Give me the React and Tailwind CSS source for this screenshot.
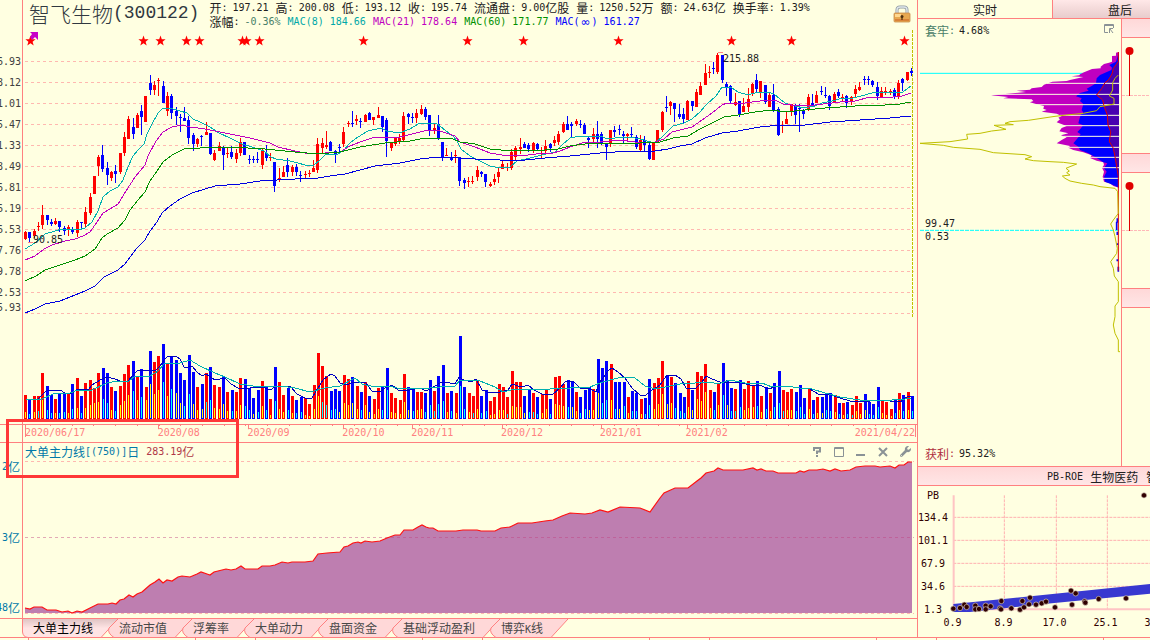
import React from 'react';
import clsx from 'clsx';
import { FaWrench } from 'react-icons/fa';

const PRICE_LEVELS = [
  '206.93', '188.12', '171.01', '155.47', '141.33', '128.49', '116.81',
  '106.19', '96.53', '87.76', '79.78', '72.53',
];

const QUOTES = [
  { label: '开', value: '197.21' },
  { label: '高', value: '200.08' },
  { label: '低', value: '193.12' },
  { label: '收', value: '195.74' },
  { label: '流通盘', value: '9.00', unit: '亿股' },
  { label: '量', value: '1250.52', unit: '万' },
  { label: '额', value: '24.63', unit: '亿' },
  { label: '换手率', value: '1.39%' },
];

// bar colour + height, then inner bar colour (y = yellow, c = cyan) + height
const VOLUMES = `
r24y6 b20c4 r23y6 r23c7 r46y18 b33c8 b24c5 r20y5 b25c5 b26c6 r26y5 b35c9 r41y10 b23c5 r36y10 r39y13
r31y15 r46y16 b51c19 b46c15 r32y8 b28c7 r33y13 r45y17 r54y23 b58c27 r43y18 b50c21 r32y18 b68y34
r57y24 r63y28 b75c36 r55y22 b63c29 b59y25 b46y15 b39c12 b64c24 b47y14 r32y8 b35y9 r46c16 b52c18
r34y10 r32y9 b42y14 r27y7 b29c7 r27y7 r41y13 b40c12 b31c8 b21y4 b29c6 r38y12 b33c8 r20y3 b52c17
r37y9 r24y6 b31c8 r23y5 b19c5 b22c6 r21y3 r15y2 r34y9 r66y22 r53c16 r43c13 b28c8 b30c9 b28y6
r44y15 r40y13 b42y15 r33y9 b27c8 r37y13 b23y6 r20y4 r31y9 b32c8 b51c28 r26y6 r21y5 r19y4 r45y16
b32y8 b29c7 r27y8 r27y9 b26c6 b39c13 r28c7 b43c14 b54c17 r26y6 b28c7 r26y5 b83c32 b32c9 r26y6
r23c5 r39y9 b23c5 b29c7 r18y3 r22y4 r35y8 r32y8 r22c4 r48y12 r37y11 r37y11 b23y5 b30c6 r26c6
b22c4 r25y5 r30y9 b20c4 r42y14 r43y13 r35y12 b39c11 b38y11 r27y7 b22c5 b29c9 b32y8 r30y8 b60y25
b51c15 b58c18 r55y18 b37c9 b37y9 b37c12 r22y5 b28c7 b26c7 r20y4 b21c4 b40c13 r36y9 r41y14 r58y24
b44y14 r42y15 b36c10 b26c7 b22c5 r38y11 b29y8 r47y19 r43y17 r55y26 r29y10 b27c8 r35y13 b56c23
b39y13 b31c7 r30c7 b39c11 r30y8 r38y10 r34y11 b38c12 r23y6 b32c9 r26y7 b36c11 b48c15 r29c7 r27y8
r30y8 b27c7 b34c11 b21c4 r31y9 b19c4 r22y5 b22y5 b25c8 b26c7 r24y6 b16c4 r16y3 b17c4 r14c3 r23y7
r16y4 b25y8 b17c4 b15c3 b32c11 r18y5 r17y3 r10y2 b20c5 r26y8 b24c7 r27y8 b23c7
`.trim().split(/\s+/).map((token) => {
  const [, color, height, inner, innerHeight] = token.match(/^([rb])(\d+)([yc])(\d+)$/);
  return { color, height: Number(height), inner, innerHeight: Number(innerHeight) };
});

// high, body top, body bottom, low
const CANDLES = `
231,232,239,240 232,232,238,242 229,231,236,238 222,226,227,231 205,215,225,229 215,215,220,225
219,222,224,226 218,221,224,225 221,221,227,232 226,228,231,235 225,227,230,236 227,229,232,234
220,222,233,237 222,222,223,228 207,212,224,227 193,197,213,215 176,176,194,194 155,157,166,176
145,155,169,172 162,168,175,185 171,172,178,181 165,171,174,183 153,153,172,174 132,137,153,156
116,119,139,139 118,127,134,139 113,115,128,128 105,111,117,135 96,96,122,122 75,83,90,95
81,85,90,95 78,80,81,96 81,86,103,103 92,96,111,116 94,96,113,119 107,111,116,125 114,117,118,132
107,118,121,121 116,120,138,144 133,135,144,151 138,139,144,147 135,136,137,146 122,132,135,135
133,133,154,155 150,153,160,161 142,146,151,151 146,147,155,170 147,153,154,158 146,152,157,159
149,153,159,163 138,142,153,156 142,142,155,155 155,159,160,164 156,159,160,163 152,159,160,163
149,151,165,169 145,153,158,161 153,157,158,161 162,162,186,192 168,178,180,182 166,172,177,177
158,165,172,177 165,167,172,176 164,167,172,176 171,175,176,182 171,174,175,178 170,173,174,177
160,168,172,172 138,144,170,173 138,143,148,153 131,145,147,149 141,142,151,151 150,151,155,163
144,147,148,152 127,132,144,147 121,123,124,127 111,123,124,127 115,119,121,125 118,121,122,128
114,115,122,122 112,113,120,120 117,117,120,125 107,115,118,118 116,116,127,132 118,120,141,157
142,143,148,151 137,138,144,146 134,138,141,144 112,116,140,141 113,114,117,124 113,117,118,123
109,113,118,123 105,109,114,115 107,109,117,120 115,115,131,136 123,128,130,134 115,124,138,140
142,142,158,161 148,155,156,156 152,157,160,161 150,155,156,163 157,157,181,186 178,180,183,189
177,181,182,187 176,181,182,184 166,170,177,181 171,172,174,177 174,174,182,187 182,184,186,187
174,179,182,185 168,172,177,183 160,164,169,169 163,167,168,171 149,152,168,170 146,148,157,160
138,147,149,154 142,144,148,148 143,145,149,152 142,143,151,153 143,144,149,151 147,150,151,159
140,146,151,154 143,144,148,152 136,140,143,146 131,134,142,145 122,124,132,133 116,124,130,130
122,124,126,138 119,121,124,126 120,124,125,128 123,125,134,134 137,138,140,148 128,134,139,142
121,134,139,148 132,134,143,145 143,143,147,160 130,130,144,147 126,130,132,137 125,129,130,135
131,134,136,144 133,134,136,140 127,134,135,138 135,137,147,149 135,140,150,152 136,140,145,151
143,145,159,160 143,143,160,160 130,130,142,142 111,112,130,132 96,107,108,112 101,102,106,115
103,103,109,122 104,114,117,119 108,114,119,124 100,101,120,120 101,101,106,111 89,92,107,107
82,86,95,95 64,73,85,85 66,72,73,78 62,68,69,74 53,55,72,74 55,55,80,83 82,84,88,96
85,86,101,104 93,102,105,106 101,101,115,117 98,106,112,112 88,99,107,112 83,84,94,96 74,80,89,93
81,81,92,98 85,85,102,104 92,95,107,107 84,95,110,112 107,109,135,136 121,125,126,133
112,119,124,124 104,104,112,116 104,106,115,124 104,108,109,132 109,111,114,119 94,97,109,111
94,103,105,107 91,95,103,103 86,91,92,95 87,95,96,98 95,96,106,110 92,94,103,103 89,92,96,98
94,97,98,101 95,96,103,108 96,97,102,105 85,89,94,98 82,87,90,91 76,79,80,85 76,79,80,85
80,81,85,87 82,87,96,100 87,91,98,98 87,91,92,95 89,91,92,95 88,90,97,99 80,83,97,99
78,79,83,91 72,72,80,81 68,71,73,76
`.trim().split(/\s+/).map((row) => row.split(',').map(Number));

const AVERAGES = [
  {
    color: '#00b0b0',
    points: '25,249 35,243 45,234 55,231 62,229 78,230 85,228 92,222 98,211 103,197 110,191 118,187 123,180 128,167 133,156 138,150 144,144 147,134 152,124 158,113 163,108 170,108 180,111 187,113 193,119 200,122 210,127 219,133 230,138 242,144 252,147 264,151 271,157 276,159 283,160 290,161 298,163 305,165 314,165 320,160 325,155 338,154 344,150 350,143 358,137 368,131 381,128 387,131 399,133 410,129 418,124 427,123 437,124 445,130 454,137 457,141 461,149 470,156 480,161 490,166 500,168 510,167 517,161 530,158 542,155 555,152 562,145 570,138 580,136 600,136 608,139 615,138 630,137 640,139 651,142 656,142 662,137 668,131 673,126 684,123 692,119 700,112 706,105 716,96 722,87 732,88 738,92 748,95 758,92 768,92 774,94 780,99 785,103 795,106 804,108 815,106 822,103 832,101 843,98 853,98 865,95 875,92 885,92 897,93 903,92 911,86',
  },
  {
    color: '#c000c0',
    points: '25,260 35,256 44,249 52,245 65,241 75,239 83,236 90,232 97,222 103,213 110,209 118,204 126,191 135,177 145,165 148,156 156,141 163,132 172,127 182,125 190,127 205,129 220,132 235,135 250,138 270,143 278,147 295,151 310,154 340,152 350,146 360,142 372,138 388,137 400,137 412,134 428,130 440,131 455,136 460,142 475,147 490,153 508,156 528,155 545,153 553,153 560,151 570,147 585,142 600,142 620,140 635,142 655,142 664,139 672,132 684,129 692,127 702,120 712,113 722,105 727,103 745,103 760,101 775,100 783,104 800,106 815,105 840,102 855,101 870,97 885,98 902,96 911,93',
  },
  {
    color: '#009000',
    points: '25,281 36,276 45,270 60,265 75,260 85,256 95,249 102,238 107,234 118,228 125,220 130,210 138,200 145,192 150,181 157,171 163,162 172,155 184,149 200,148 230,147 265,149 295,152 318,154 340,152 360,147 385,143 410,141 425,138 440,138 453,139 460,142 475,144 490,149 512,151 545,150 558,149 570,146 585,144 610,143 640,143 660,142 673,138 688,136 700,129 712,123 724,117 738,115 755,112 772,110 785,112 805,110 825,108 855,106 885,105 900,104 911,102',
  },
  {
    color: '#0000e0',
    points: '25,313 35,309 45,304 60,301 75,295 85,291 95,286 104,277 118,270 125,264 130,257 137,248 145,240 150,231 157,222 162,213 170,206 180,199 192,193 205,189 215,186 240,184 260,181 295,179 318,178 330,176 345,174 360,170 375,166 400,163 420,159 438,157 460,158 475,159 500,160 525,160 545,158 570,156 600,153 630,151 655,151 668,149 680,146 692,144 705,138 722,133 738,131 760,127 780,125 805,125 830,122 860,120 890,118 911,116',
  },
  {
    color: '#0000c0',
    points: '26,400 38,399 43,394 47,390 60,390 65,393 72,393 78,389 88,390 92,385 100,380 107,377 115,379 120,381 128,381 134,374 137,371 145,370 155,371 160,366 164,360 168,356 176,356 180,359 184,367 188,367 192,366 197,372 202,376 206,374 215,380 225,378 231,384 238,388 250,388 262,387 270,390 275,387 290,386 297,394 307,399 312,398 318,388 323,380 331,374 335,376 340,383 346,385 354,382 365,382 372,391 380,392 385,388 392,385 398,390 410,390 420,388 426,391 435,386 440,383 445,382 455,384 459,377 464,380 472,382 476,379 482,390 490,393 500,392 508,390 512,384 518,386 522,387 528,385 534,390 542,394 552,395 560,388 565,382 573,381 580,388 590,389 596,392 600,382 608,371 612,368 618,372 625,378 632,388 640,395 645,396 652,390 660,385 667,375 675,375 681,379 686,388 695,389 702,382 706,376 712,379 720,382 735,382 742,383 750,385 760,385 768,389 775,387 785,386 800,388 810,389 818,394 828,394 840,398 850,401 865,402 875,400 890,401 900,402 907,397 911,396',
  },
  {
    color: '#00b0b0',
    points: '26,399 40,400 55,393 70,393 78,390 92,390 107,383 118,381 128,382 135,376 150,376 158,371 165,363 180,363 190,360 200,366 215,373 225,377 240,384 260,387 280,386 295,388 310,392 325,388 340,386 355,378 362,384 375,387 390,386 400,389 430,388 440,387 455,386 460,380 480,381 495,387 503,392 515,389 530,389 550,389 570,388 590,387 600,383 610,380 622,377 635,378 645,386 655,389 665,387 680,384 710,382 718,384 730,380 745,383 762,383 772,387 785,386 800,388 812,389 825,393 840,397 860,400 880,401 905,399 911,398',
  },
];

const STARS = [30.5, 143.5, 160.5, 186.5, 199.5, 242.5, 246.5, 259.5, 363.5, 467.5, 523.5, 618.5, 731.5, 791.5, 904.5];

const FLOW_LINE =
  '25,608 30,609 34,607 42,607 47,610 56,610 62,612 68,611 72,613 77,611 82,612 90,608 98,604 108,604 112,603 116,604 120,600 124,599 129,595 133,597 137,594 142,592 150,585 155,582 159,579 163,583 167,580 172,581 178,577 182,576 190,577 197,574 201,572 207,574 210,575 214,572 218,571 226,569 231,570 236,569 241,566 245,569 258,569 262,566 270,566 275,565 282,562 288,563 292,562 305,562 313,561 318,554 327,553 340,552 344,547 348,546 353,543 358,542 361,543 365,541 372,542 380,541 387,538 395,535 400,535 404,530 413,530 418,527 422,525 426,527 429,528 433,528 438,531 456,531 463,530 477,530 481,531 495,531 501,528 510,527 518,523 532,523 545,521 553,520 562,516 570,513 585,514 592,513 600,510 608,512 620,507 640,508 650,512 660,498 664,493 675,488 688,488 697,481 701,478 706,473 714,471 718,468 723,470 733,470 743,470 753,468 757,470 761,469 766,471 773,471 778,473 796,473 800,471 804,472 809,470 817,470 823,469 830,471 835,469 841,471 850,470 856,467 865,466 875,466 880,467 890,466 895,468 899,465 904,465 908,462 912,462';

const SCATTER = [
  [160, 536], [180, 534], [193, 524], [200, 531], [226, 527], [226, 538], [237, 537], [257, 527],
  [257, 538], [272, 529], [300, 535], [304, 513], [303, 538], [334, 535], [360, 539], [367, 513],
  [372, 532], [387, 523], [390, 503], [408, 524], [425, 520], [438, 515], [465, 532], [513, 482],
  [527, 490], [516, 524], [554, 514], [556, 518], [596, 507], [678, 505], [732, 196],
];

const BOTTOM_TABS = ['大单主力线', '流动市值', '浮筹率', '大单动力', '盘面资金', '基础浮动盈利', '博弈K线'];

const Mono = ({ className, children }) => (
  <span className={clsx("font-['DejaVu_Sans_Mono',monospace] text-[10px] whitespace-pre", className)}>
    {children}
  </span>
);

const starPoints = (cx, cy) =>
  Array.from({ length: 10 }, (_, i) => {
    const r = i % 2 ? 2.2 : 5.4;
    const a = (Math.PI / 5) * i - Math.PI / 2;
    return `${(cx + r * Math.cos(a)).toFixed(1)},${(cy + r * Math.sin(a)).toFixed(1)}`;
  }).join(' ');

const LockIcon = () => (
  <svg viewBox="0 0 18 18" className="size-[18px]" aria-hidden="true">
    <path d="M4 10V5Q4 2 7 2H11Q14 2 14 5V10" fill="none" stroke="#8f9aa3" strokeWidth="3" />
    <path d="M4 10V5Q4 2 7 2H11Q14 2 14 5V10" fill="none" stroke="#dfe6ea" strokeWidth="1.4" />
    <rect x="1" y="8" width="16" height="9" rx="1" fill="#e8a850" stroke="#c88a4a" strokeWidth="0.8" />
    <rect x="2" y="9" width="6" height="3" fill="#ffd890" />
    <rect x="2" y="14" width="14" height="2" fill="#d98238" />
    <circle cx="9" cy="11.5" r="1.5" fill="#503010" />
    <rect x="8.4" y="12" width="1.2" height="3" fill="#503010" />
  </svg>
);

const PriceChart = () => (
  <svg
    viewBox="23 30 894 394"
    preserveAspectRatio="none"
    className="block h-[394px] w-full"
    shapeRendering="crispEdges"
    role="img"
    aria-label="日K线"
  >
    {Array.from({ length: 13 }, (_, i) => (
      <line key={i} x1="25" x2="914" y1={61.5 + i * 21} y2={61.5 + i * 21} stroke="#ffb8b0" strokeDasharray="3 3" />
    ))}
    <line x1="912.5" x2="912.5" y1="30" y2="317" stroke="#c0c000" strokeDasharray="3 1" />

    {CANDLES.map(([high, top, bottom, low], i) => {
      const x = 24 + Math.round(i * 4.301);
      const fill = VOLUMES[i].color === 'r' ? '#ff0000' : '#0000ff';
      return (
        <g key={i} fill={fill}>
          <rect x={x + 1} y={high} width="1" height={low - high} />
          <rect x={x} y={top} width="3" height={bottom - top} />
        </g>
      );
    })}

    {VOLUMES.map(({ color, height, inner, innerHeight }, i) => {
      const x = 24 + Math.round(i * 4.306);
      return (
        <g key={i}>
          <rect x={x} y={419 - height} width="3" height={height} fill={color === 'r' ? '#ff0000' : '#0000ff'} />
          <rect x={x + 1} y={418 - innerHeight} width="1" height={innerHeight} fill={inner === 'y' ? '#ffff00' : '#00ffff'} />
        </g>
      );
    })}

    {AVERAGES.map(({ color, points }, i) => (
      <polyline key={i} points={points} fill="none" stroke={color} />
    ))}

    <path d="M28 242.5H33M718 52.5H723" stroke="#ff8080" />
    <g fill="#ff0000" shapeRendering="auto">
      {STARS.map((x) => (
        <polygon key={x} points={starPoints(x, 41)} />
      ))}
    </g>
    <path d="M30 32H38V40L35 37L32 40L30 37L32 34Z" fill="#c800c8" shapeRendering="auto" />
  </svg>
);

const DATE_SEGMENTS = [
  { label: '2020/06/17', grow: 'grow-133' },
  { label: '2020/08', grow: 'grow-90' },
  { label: '2020/09', grow: 'grow-95' },
  { label: '2020/10', grow: 'grow-69' },
  { label: '2020/11', grow: 'grow-90' },
  { label: '2020/12', grow: 'grow-99' },
  { label: '2021/01', grow: 'grow-86' },
  { label: '2021/02', grow: 'grow-115' },
];

const DateAxis = () => (
  <div className="relative flex h-[18px] border-t border-[#ff8080] pl-[2px] text-[#ff8080]">
    <svg viewBox="23 0 894 14" preserveAspectRatio="none" className="absolute top-0 left-0 h-[14px] w-full" aria-hidden="true">
      <path d="M25.5 0V12M158.5 0V4M248.5 0V4M343.5 0V4M412.5 0V4M502.5 0V4M601.5 0V4M687.5 0V4M915.5 0V12" stroke="#ff8080" />
      {Array.from({ length: 40 }, (_, i) => (
        <rect key={i} x={Math.round(50 + i * 21.7)} y="0" width="1" height="1" fill="#ff8080" />
      ))}
    </svg>
    {DATE_SEGMENTS.map(({ label, grow }) => (
      <Mono key={label} className={clsx('w-0 leading-[16px]', grow)}>{label}</Mono>
    ))}
    <Mono className="w-0 grow-115 pr-[2px] text-right leading-[16px]">2021/04/22</Mono>
  </div>
);

const toolButton = 'flex w-[22px] items-center justify-center text-[#8a9296]';

const FlowPanel = () => (
  <div className="flex-1">
    <div className="flex h-[18px] items-center justify-between pr-px pb-px pl-[2px]">
      <h2 className="flex items-center text-xs leading-none text-[#0078a8]">
        大单主力线<Mono>[(750)]</Mono>日
        <Mono className="ml-[7px] text-[#b03848]">283.19</Mono>
        <span className="text-[#b03848]">亿</span>
      </h2>
      <div className="flex h-full">
        <button type="button" className={toolButton} aria-label="帮助">
          <svg viewBox="0 0 9 10" className="h-[10px] w-[9px]" fill="none" stroke="currentColor" strokeWidth="2">
            <path d="M1 4V1H7V4.500H4V7M4 8V10" />
          </svg>
        </button>
        <button type="button" className={toolButton} aria-label="最大化">
          <svg viewBox="0 0 10 10" className="size-[10px]" fill="none" stroke="currentColor">
            <path d="M0.5 0.500H9.500V9.500H0.500ZM0 1.500H10" />
          </svg>
        </button>
        <button type="button" className={toolButton} aria-label="最小化">
          <svg viewBox="0 0 10 10" className="size-[10px]"><rect y="7" width="9" height="2" fill="currentColor" /></svg>
        </button>
        <button type="button" className={toolButton} aria-label="关闭">
          <svg viewBox="0 0 10 10" className="size-[10px]" stroke="currentColor" strokeWidth="2"><path d="M1 1L9 9M9 1L1 9" /></svg>
        </button>
        <button type="button" className={toolButton} aria-label="设置">
          <FaWrench size={11} />
        </button>
      </div>
    </div>
    <svg viewBox="23 461 894 157" preserveAspectRatio="none" className="block h-[157px] w-full" role="img" aria-label="大单主力线">
      <polygon points={`25,613 ${FLOW_LINE} 912,613`} fill="#be7eb0" />
      <path d="M25 461.5H914M25 613.5H914" stroke="#ffb8b0" strokeDasharray="3 3" />
      <path d="M25 537.5H914" stroke="#c04080" strokeOpacity="0.45" strokeDasharray="3 3" />
      <polyline points={FLOW_LINE} fill="none" stroke="#ff1010" strokeWidth="1.2" />
    </svg>
  </div>
);

const BottomTab = ({ label, active }) => {
  const width = [...label].reduce((sum, ch) => sum + (ch === 'K' ? 6 : 12), 26);
  const left = active ? 'M2.500 0V13Q3 18 8 18.500' : 'M12 0L3 9Q1 14 8 18.500';
  return (
    <button
      type="button"
      role="tab"
      aria-selected={active}
      className={clsx('relative h-[18px] shrink-0 text-xs leading-none whitespace-nowrap', active ? 'text-black' : 'text-[#484848]')}
      style={{ width }}
    >
      <svg width={width + 14} height="19" className="absolute top-0 left-0" aria-hidden="true">
        <path
          d={`${left}H${width - 5}L${width + 12} 0`}
          fill={active ? 'url(#activeTab)' : '#ffd8d8'}
          stroke="#ff8080"
        />
      </svg>
      <span className="relative">
        {label.split('K').map((part, i) => (
          <React.Fragment key={part}>
            {i > 0 && <Mono>K</Mono>}
            {part}
          </React.Fragment>
        ))}
      </span>
    </button>
  );
};

// viewBox units are a third of a pixel
const ChipDistribution = () => (
  <svg viewBox="54 57 609 1341" preserveAspectRatio="none" className="block h-[447px] w-full" role="img" aria-label="筹码分布">
    <path d="M60 220H657" stroke="#00ffff" strokeWidth="3" />
    <path d="M60 691H657" stroke="#00ffff" strokeWidth="3" strokeDasharray="12 3" />
    <polygon
      fill="#c000c0"
      points="657,156 648,158 648,167 636,168 636,185 627,188 612,192 602,200 602,205 576,207 552,217 540,223 538,226 515,229 550,231 527,236 510,240 500,243 457,245 432,254 425,261 395,265 390,269 350,272 378,276 324,281 273,286 325,291 310,295 395,298 400,303 390,307 408,312 432,318 430,326 440,330 425,335 470,341 485,348 475,353 480,358 470,367 500,378 485,384 478,394 505,400 483,406 500,412 485,420 470,430 510,438 505,443 520,450 550,457 575,466 570,474 590,482 610,487 612,495 606,503 612,515 608,530 612,545 630,550 640,558 657,563"
    />
    <polygon
      fill="#0000ff"
      points="657,156 648,185 628,195 636,203 634,210 600,225 590,235 588,250 575,258 560,266 566,272 540,279 528,289 545,295 540,303 550,312 545,330 550,338 542,345 538,358 535,370 550,376 540,388 532,396 542,403 534,413 520,430 535,440 540,450 565,460 590,474 610,487 622,490 612,505 620,515 612,530 615,545 632,552 657,563"
    />
    <polygon
      fill="#4800b0"
      points="657,156 655,185 640,205 636,222 625,240 615,248 605,265 590,285 608,300 612,318 622,345 624,375 632,395 628,425 640,445 645,470 650,500 657,530"
    />
    <path
      d="M440 250H657M270 283H657M400 314H657M480 346H657M490 377H657M490 409H657M505 442H657M570 472H657M605 503H657M605 535H657"
      stroke="#ffffe1"
      strokeWidth="3"
    />
    <path d="M652 655V668M650 665V690M652 695V705M652 730V735M652 778V784M655 800V815" stroke="#0000ff" strokeWidth="5" />
    <polyline
      fill="none"
      stroke="#e00000"
      strokeWidth="3"
      points="655,156 655,185 640,205 636,222 625,240 615,248 605,265 590,285 608,300 612,318 622,345 624,375 632,395 628,425 640,445 645,470 650,500 655,530 655,812"
    />
    <polyline
      fill="none"
      stroke="#c0c000"
      strokeWidth="3"
      points="655,225 645,235 638,248 638,270 628,288 642,295 642,312 600,320 590,332 550,340 500,345 465,349 385,361 330,365 315,370 340,374 282,376 318,388 275,393 240,400 200,403 203,417 150,425 60,430 130,436 160,442 240,448 280,458 375,464 395,470 375,477 400,482 450,485 490,487 530,492 510,500 498,505 508,513 500,518 510,525 487,528 495,535 510,543 545,550 580,555 600,560 645,565 653,575 655,640 640,660 632,672 640,690 645,710 652,745 650,760 632,785 640,805 643,828 655,845 655,905 645,918 645,950 640,975 645,1000 655,1020 655,1055 660,1055"
    />
  </svg>
);

const PinStrip = () => (
  <svg viewBox="0 0 28 115" className="block h-[115px] w-[28px]" aria-hidden="true">
    <path d="M0 57.500H28" stroke="#ffb8b8" strokeDasharray="3 1" />
    <path d="M7.500 13V58" stroke="#e00000" />
    <circle cx="7.500" cy="13" r="4" fill="#e00000" />
  </svg>
);

const PbRoeChart = () => (
  <div className="text-[#300000]">
    <div className="flex h-[129px]">
      <div className="flex w-[30px] shrink-0 flex-col items-center">
        <Mono className="h-[20px] shrink-0 leading-[20px]">PB</Mono>
        {['134.4', '101.1', '67.9', '34.6', '1.3'].map((label) => (
          <Mono key={label} className="h-[23px] shrink-0 leading-[23px]">{label}</Mono>
        ))}
      </div>
      <svg viewBox="144 168 606 387" preserveAspectRatio="none" className="block h-[129px] w-0 grow" role="img" aria-label="PB-ROE">
        <path
          d="M160 262H750M160 331H750M160 400H750M160 469H750M313 196V538M469 196V538M622 196V538"
          stroke="#ffb0b0"
          strokeWidth="3"
          strokeDasharray="9 3"
        />
        <path d="M161 196V541M161 538H750" stroke="#ffc4c4" strokeWidth="6" fill="none" />
        <polygon points="160,522 750,462 750,491 440,521 210,546 160,546" fill="#3838d0" />
        {SCATTER.map(([x, y]) => (
          <circle key={`${x}-${y}`} cx={x} cy={y} r="8" fill="#300000" stroke="#d8c8b8" strokeWidth="2" />
        ))}
      </svg>
    </div>
    <div className="flex h-[22px] overflow-hidden pl-[9px]">
      {['0.9', '8.9', '17.0', '25.1', '33.2'].map((label) => (
        <Mono key={label} className="w-[51px] shrink-0 text-center leading-[16px]">{label}</Mono>
      ))}
    </div>
  </div>
);

const SidePanel = () => (
  <aside className="w-[233px] shrink-0 overflow-hidden border-l border-[#ff8080]">
    <div role="tablist" className="flex h-[19px] border-b border-[#ff8080]">
      <button type="button" role="tab" aria-selected="true" className="w-[134px] shrink-0 pt-[2px] text-xs leading-none">
        实时
      </button>
      <button
        type="button"
        role="tab"
        aria-selected="false"
        className="w-[135px] shrink-0 border-l border-[#ff8080] bg-linear-to-b from-[#ffe8e8] to-[#e8cccc] pt-[2px] text-xs leading-none"
      >
        盘后
      </button>
    </div>

    <div className="flex">
      <div className="relative min-w-0 flex-1">
        <ChipDistribution />
        <div className="absolute top-[6px] left-[7px] flex items-center text-xs leading-none text-[#488068]">
          套牢<Mono>:</Mono><Mono className="ml-[4px] text-[#202020]">4.68%</Mono>
        </div>
        <button type="button" className="absolute top-[5px] right-[7px] text-[#8a9296]" aria-label="弹出">
          <svg viewBox="0 0 10 10" className="size-[10px]" fill="none" stroke="currentColor">
            <path d="M4 8.500H0.500V0.500H9.500V4M0 1.500H10M5.500 9V4.500H9M6 5L9 9" />
          </svg>
        </button>
        <Mono className="absolute top-[198px] left-[7px] leading-[13px] text-[#202020]">99.47</Mono>
        <Mono className="absolute top-[211px] left-[7px] leading-[13px] text-[#202020]">0.53</Mono>
        <div className="absolute bottom-[6px] left-[7px] flex items-center text-xs leading-none text-[#b03040]">
          获利<Mono>:</Mono><Mono className="ml-[4px] text-[#202020]">95.32%</Mono>
        </div>
      </div>
      <div className="w-[29px] shrink-0 border-l border-[#ff8080]">
        <div className="h-[19px] border-b border-[#ff8080] bg-linear-to-b from-[#ffd8d8] to-[#ffe6e6]" />
        <PinStrip />
        <div className="h-[20px] border-y border-[#ff8080] bg-linear-to-b from-[#ffd8d8] to-[#ffe6e6]" />
        <PinStrip />
        <div className="h-[20px] border-y border-[#ff8080] bg-linear-to-b from-[#ffd8d8] to-[#ffe6e6]" />
      </div>
    </div>

    <h2 className="flex h-[20px] items-center border-y border-[#ff8080] bg-linear-to-b from-[#ffd8d8] to-[#ffe6e6] pt-px pl-[129px] text-xs leading-none whitespace-nowrap">
      <Mono>PB-ROE</Mono>
      <span className="ml-[7px]">生物医药</span>
      <span className="ml-[8px]">智飞生物</span>
    </h2>
    <PbRoeChart />
  </aside>
);

const App = () => (
  <div className="min-h-screen overflow-hidden bg-[#ffffe1] font-['Noto_Sans_CJK_SC',sans-serif] text-[#202020]">
    <svg width="0" height="0" className="absolute" aria-hidden="true">
      <linearGradient id="activeTab" x2="0" y2="1">
        <stop stopColor="#e0c4c4" />
        <stop offset="0.5" stopColor="#ffe4e4" />
      </linearGradient>
    </svg>
    <div className="flex">
      <main className="relative min-w-0 flex-1">
        <section className="flex">
          <div className="flex w-[23px] shrink-0 flex-col items-end overflow-hidden border-r border-[#ff8080] pt-[51px] pr-px text-[#404040]">
            {PRICE_LEVELS.map((level) => (
              <Mono key={level} className="h-[21px] leading-[21px]">{level}</Mono>
            ))}
            <Mono className="leading-[10px]">65.93</Mono>
          </div>
          <div className="relative min-w-0 flex-1">
            <header className="flex h-[30px] gap-[10px] pl-[6px]">
              <h1 className="flex shrink-0 items-center pb-[4px] text-[21px] leading-none font-light whitespace-nowrap text-[#303840]">
                智飞生物<span className="font-['Liberation_Mono',monospace] text-[18px]">(300122)</span>
              </h1>
              <div className="flex shrink-0 flex-col pt-px text-xs leading-none">
                <div className="flex h-[14px] items-center gap-[7px]">
                  {QUOTES.map(({ label, value, unit }) => (
                    <span key={label} className="flex items-center whitespace-nowrap">
                      {label}<Mono>:</Mono><Mono className="ml-[5px]">{value}</Mono>{unit}
                    </span>
                  ))}
                </div>
                <div className="flex h-[16px] items-center gap-[7px] whitespace-nowrap">
                  <span className="flex items-center">
                    涨幅<Mono>:</Mono><Mono className="ml-[5px] text-[#488068]">-0.36%</Mono>
                  </span>
                  <Mono className="text-[#00a8a8]">MAC(8) 184.66</Mono>
                  <Mono className="text-[#c000c0]">MAC(21) 178.64</Mono>
                  <Mono className="text-[#009000]">MAC(60) 171.77</Mono>
                  <span className="flex items-center text-[#0000ff]">
                    <Mono>MAC(</Mono>
                    <span className="w-[12px] text-center font-['DejaVu_Sans',sans-serif]">∞</span>
                    <Mono>) 161.27</Mono>
                  </span>
                </div>
              </div>
              <button type="button" className="mr-[6px] mb-[3px] ml-auto" aria-label="锁定">
                <LockIcon />
              </button>
            </header>
            <PriceChart />
            <Mono className="absolute top-[234px] left-[10px] leading-[12px]">90.85</Mono>
            <Mono className="absolute top-[53px] left-[78.3%] leading-[12px]">215.88</Mono>
          </div>
        </section>

        <div className="flex">
          <div className="w-[23px] shrink-0 border-t border-r border-[#ff8080]" />
          <div className="min-w-0 flex-1">
            <DateAxis />
          </div>
        </div>

        <section className="flex border-t border-[#ff8080]">
          <div className="flex w-[23px] shrink-0 flex-col items-end justify-between overflow-hidden border-r border-[#ff8080] pt-[18px] pr-[2px] pb-[4px] text-xs leading-[12px] whitespace-nowrap text-[#0078a8]">
            <span className="flex items-center"><Mono>2</Mono>亿</span>
            <span className="flex items-center"><Mono>3</Mono>亿</span>
            <span className="flex items-center"><Mono>48</Mono>亿</span>
          </div>
          <FlowPanel />
        </section>

        <div role="tablist" className="flex h-[19px] border-t border-[#ff8080] pl-[20px]">
          {BOTTOM_TABS.map((label, i) => (
            <BottomTab key={label} label={label} active={i === 0} />
          ))}
        </div>

        {/* highlight frame over the indicator title */}
        <div className="pointer-events-none absolute top-[419px] left-[6px] h-[59px] w-[233px] border-3 border-[#ff3838]" />
      </main>
      <SidePanel />
    </div>
    <div className="flex h-[3px] gap-[59px] border-t border-[#ff8080] pl-[28px]">
      {Array.from({ length: 5 }, (_, i) => (
        <div key={i} className="w-[168px] shrink-0 border-x border-[#ff8080]" />
      ))}
    </div>
  </div>
);

export default App;
